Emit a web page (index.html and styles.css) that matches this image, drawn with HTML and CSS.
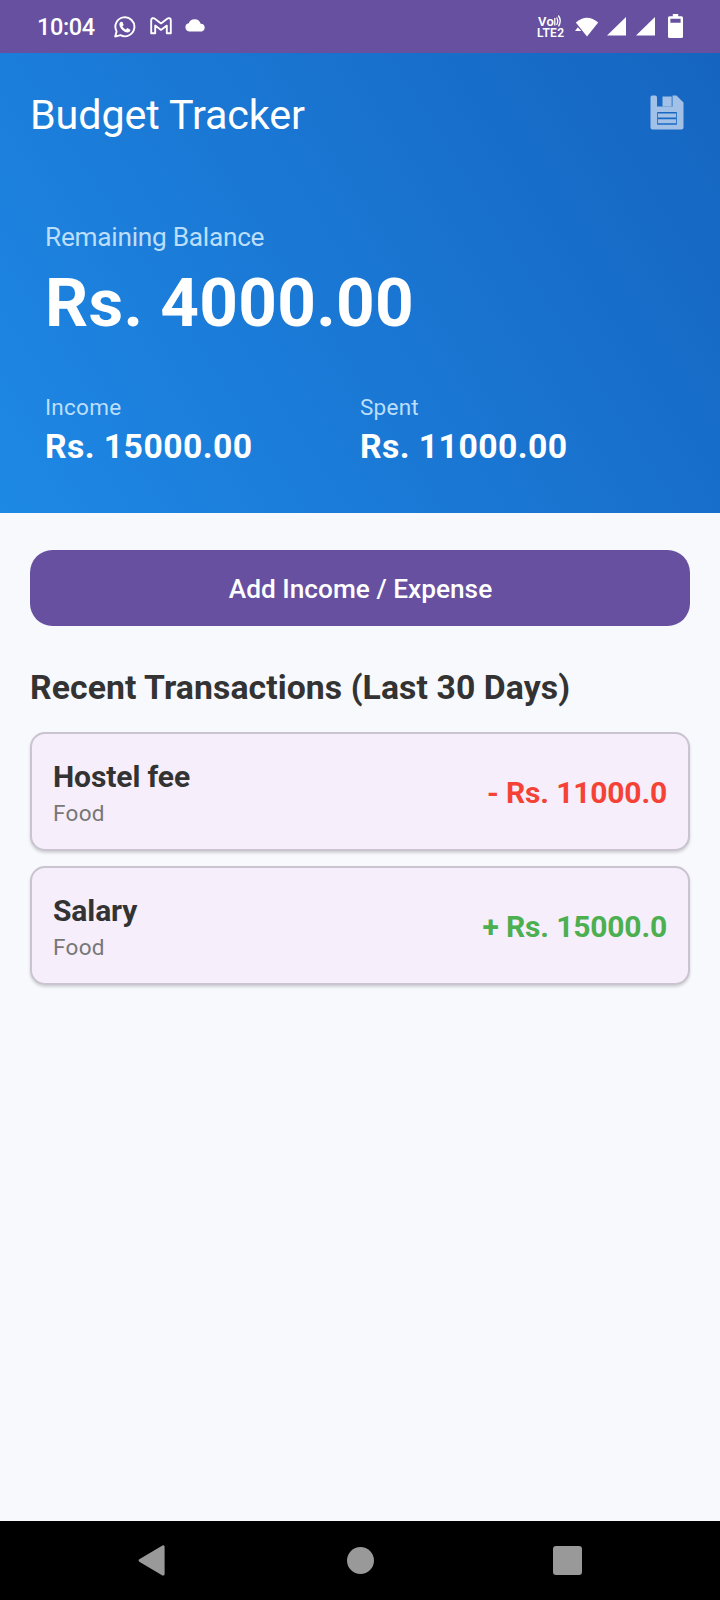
FILE: index.html
```html
<!DOCTYPE html>
<html lang="en">
<head>
<meta charset="utf-8">
<title>Budget Tracker</title>
<link rel="stylesheet" href="styles.css">
</head>
<body>
<div class="screen">
  <div class="status-bar">
    <span class="clock">10:04</span>
    <svg class="icon-whatsapp" width="22" height="22" viewBox="0 0 22 22" fill="none">
      <path d="M1.200 20.600 2.600 15.400A9.500 9.500 0 1 1 6.500 19.200Z" stroke="#fff" stroke-width="1.900" stroke-linejoin="round"/>
      <path d="M7.200 5.700c-.8 0-1.800 1-1.800 2.500 0 3.600 4.500 8.200 8 8.200 1.600 0 2.900-1 3-2.700l-3.100-1.600-1.400 1.500c-1.500-.6-2.800-1.800-3.500-3.300L9.700 9 8.500 6Z" fill="#fff"/>
    </svg>
    <svg class="icon-gmail" width="22" height="18" viewBox="0 0 22 18" fill="none" stroke="#fff" stroke-width="1.900" stroke-linejoin="round">
      <path d="M1.200 16.200V3.200C1.200 1.100 3.300.6 4.800 1.700l6.200 4.700 6.200-4.700c1.500-1.100 3.600-.6 3.600 1.500v13h-4V8.600L11 12.900 5.200 8.600v7.600Z"/>
    </svg>
    <svg class="icon-cloud" width="21" height="13" viewBox="0 0 21 13">
      <path d="M4.200 12.400a4.100 4.100 0 0 1-.5-8.100A6.300 6.300 0 0 1 15.700 4.800 3.900 3.900 0 0 1 17 12.400Z" fill="#fff"/>
    </svg>
    <div class="volte"><span class="volte-top">Vo<svg width="8" height="12" viewBox="0 0 8 12" fill="none" stroke="#fff" stroke-width="1.300"><path d="M.8 3v7.500M2.600 2.500q2.200 3.500 0 7.500M4.300.5q3.800 5 .2 10.800"/></svg></span><span class="volte-bottom">LTE2</span></div>
    <svg class="icon-wifi" width="24" height="20" viewBox="0 0 24 20" fill="#fff">
      <path d="M.8 5.600Q12-4 23.200 5.600L12 19.400Z"/>
      <path d="M0 14 2.800 10.200 6.300 14Z"/>
    </svg>
    <svg class="icon-signal" width="19" height="19" viewBox="0 0 19 19"><path d="M19 0V18.500H0Z" fill="#fff"/></svg>
    <svg class="icon-signal second" width="19" height="19" viewBox="0 0 19 19"><path d="M19 0V18.500H0Z" fill="#fff"/></svg>
    <svg class="icon-battery" width="15" height="24" viewBox="0 0 15 24"><path fill-rule="evenodd" d="M4.800 0h5.400v2.200h3.300A1.500 1.500 0 0 1 15 3.700v18.800a1.500 1.500 0 0 1-1.500 1.500h-12A1.500 1.500 0 0 1 0 22.500V3.700a1.500 1.500 0 0 1 1.500-1.500h3.300ZM2.400 4.700v4h10.200v-4Z" fill="#fff"/></svg>
  </div>

  <header class="hero">
    <div class="toolbar">
      <h1 class="title">Budget Tracker</h1>
      <svg class="icon-save" width="34" height="35" viewBox="0 0 34 35">
        <path fill-rule="evenodd" d="M2.200.5H5.300Q7 .5 7 2.500V11.500H22.500V.5H26.500L33.500 7.500V32.500Q33.500 34.500 31.500 34.500H2.500Q.5 34.500.5 32.500V2.500Q.5.500 2.200.500ZM7.200 17V29.700H26.800V17Z" fill="#a3c1e6"/>
        <path d="M12.500 1.500h9.200v10h-9.200Z" fill="#a3c1e6"/>
        <path d="M8 18.500h18v4H8ZM8 24.200h18v4H8Z" fill="#a3c1e6"/>
      </svg>
    </div>
    <div class="balance-label">Remaining Balance</div>
    <div class="balance">Rs. 4000.00</div>
    <div class="totals">
      <div class="total"><div class="total-label">Income</div><div class="total-value">Rs. 15000.00</div></div>
      <div class="total"><div class="total-label">Spent</div><div class="total-value">Rs. 11000.00</div></div>
    </div>
  </header>

  <main class="content">
    <button class="add-button">Add Income / Expense</button>
    <h2 class="section-title">Recent Transactions (Last 30 Days)</h2>
    <div class="card">
      <div><div class="name">Hostel fee</div><div class="category">Food</div></div>
      <div class="amount expense">- Rs. 11000.0</div>
    </div>
    <div class="card">
      <div><div class="name">Salary</div><div class="category">Food</div></div>
      <div class="amount income">+ Rs. 15000.0</div>
    </div>
  </main>

  <nav class="nav-bar">
    <svg width="30" height="34" viewBox="0 0 30 34"><path d="M3 17.500 26.200 3.800V31.200Z" fill="#999" stroke="#999" stroke-width="2.800" stroke-linejoin="round"/></svg>
    <svg width="30" height="34" viewBox="0 0 30 34"><circle cx="15.500" cy="17.500" r="13.500" fill="#999"/></svg>
    <svg width="30" height="34" viewBox="0 0 30 34"><rect x="0" y="3" width="29" height="29" rx="3" fill="#999"/></svg>
  </nav>
</div>
</body>
</html>
```

FILE: styles.css
```css
* { box-sizing: border-box; }
body { margin: 0; font-family: Roboto, "Liberation Sans", sans-serif; }
h1, h2 { margin: 0; }
svg { display: block; flex: none; }

.screen {
  width: 720px;
  height: 1600px;
  display: flex;
  flex-direction: column;
  background: #f8f9fd;
  overflow: hidden;
}

.status-bar {
  height: 53px;
  display: flex;
  align-items: flex-start;
  background: #6750a0;
  color: #fff;
}
.clock {
  width: 77px;
  margin: 13px 0 0 37px;
  font-size: 23.5px;
  line-height: 28px;
  font-weight: 500;
  letter-spacing: -.35px;
}
.icon-whatsapp { margin-top: 16px; }
.icon-gmail { margin: 17px 0 0 14px; }
.icon-cloud { margin: 19px 0 0 13px; }
.volte {
  width: 28px;
  margin: 16px 0 0 auto;
  font-size: 12px;
  line-height: 12px;
  font-weight: 600;
  letter-spacing: .3px;
}
.volte-top { display: flex; height: 11px; padding-left: 1px; font-size: 13px; }
.volte-top svg { margin-top: -1px; }
.volte-bottom { display: block; line-height: 12px; }
.icon-wifi { margin: 17px 0 0 10px; }
.icon-signal { margin: 17px 0 0 8px; }
.icon-signal.second { margin-left: 10px; }
.icon-battery { margin: 14px 37px 0 13px; }

.hero {
  height: 460px;
  padding: 38px 30px 0;
  background: linear-gradient(57.4deg, #1e88e5, #1565c0);
  color: #fff;
}
.toolbar { display: flex; justify-content: space-between; padding-right: 6px; }
.title { font-size: 41.25px; line-height: 48px; font-weight: 400; letter-spacing: -.1px; }
.icon-save { margin-top: 4px; }
.balance-label {
  margin: 83px 0 0 15px;
  font-size: 26.25px;
  line-height: 30px;
  letter-spacing: -.27px;
  color: #bbdefb;
}
.balance {
  margin: 11px 0 0 15px;
  font-size: 67.5px;
  line-height: 80px;
  font-weight: 700;
  letter-spacing: .25px;
}
.totals { display: grid; grid-template-columns: 1fr 1fr; margin: 51px 15px 0; }
.total-label { font-size: 22.5px; line-height: 26px; letter-spacing: .25px; color: #bbdefb; }
.total-value {
  margin-top: 7px;
  font-size: 33.75px;
  line-height: 40px;
  font-weight: 700;
  letter-spacing: .42px;
}

.content { flex: 1; padding: 37px 30px 0; }
.add-button {
  display: block;
  width: 100%;
  height: 76px;
  padding: 2px 0 0 1px;
  border: 0;
  border-radius: 22.5px;
  background: #6750a0;
  color: #fff;
  font: 500 26.25px/30px Roboto, sans-serif;
}
.section-title {
  margin: 42px 0 24px;
  font-size: 33.75px;
  line-height: 40px;
  font-weight: 700;
  letter-spacing: .08px;
  color: #333;
}
.card {
  height: 119px;
  margin-bottom: 15px;
  padding: 2px 21px 0;
  display: flex;
  align-items: center;
  justify-content: space-between;
  border: 2px solid #c9c4d0;
  border-radius: 15px;
  background: #f6eefa;
  box-shadow: 0 2px 3px rgba(0, 0, 0, .16);
}
.name { font-size: 30px; line-height: 36px; font-weight: 700; letter-spacing: -.1px; color: #333; }
.category { margin-top: 5px; font-size: 22.5px; line-height: 26px; letter-spacing: .3px; color: #777; }
.amount { font-size: 30px; line-height: 36px; font-weight: 700; letter-spacing: -.16px; }
.expense { color: #f44336; }
.income { color: #4caf50; }

.nav-bar {
  height: 79px;
  padding: 22px 137px 0;
  display: flex;
  justify-content: space-between;
  background: #000;
}
```
